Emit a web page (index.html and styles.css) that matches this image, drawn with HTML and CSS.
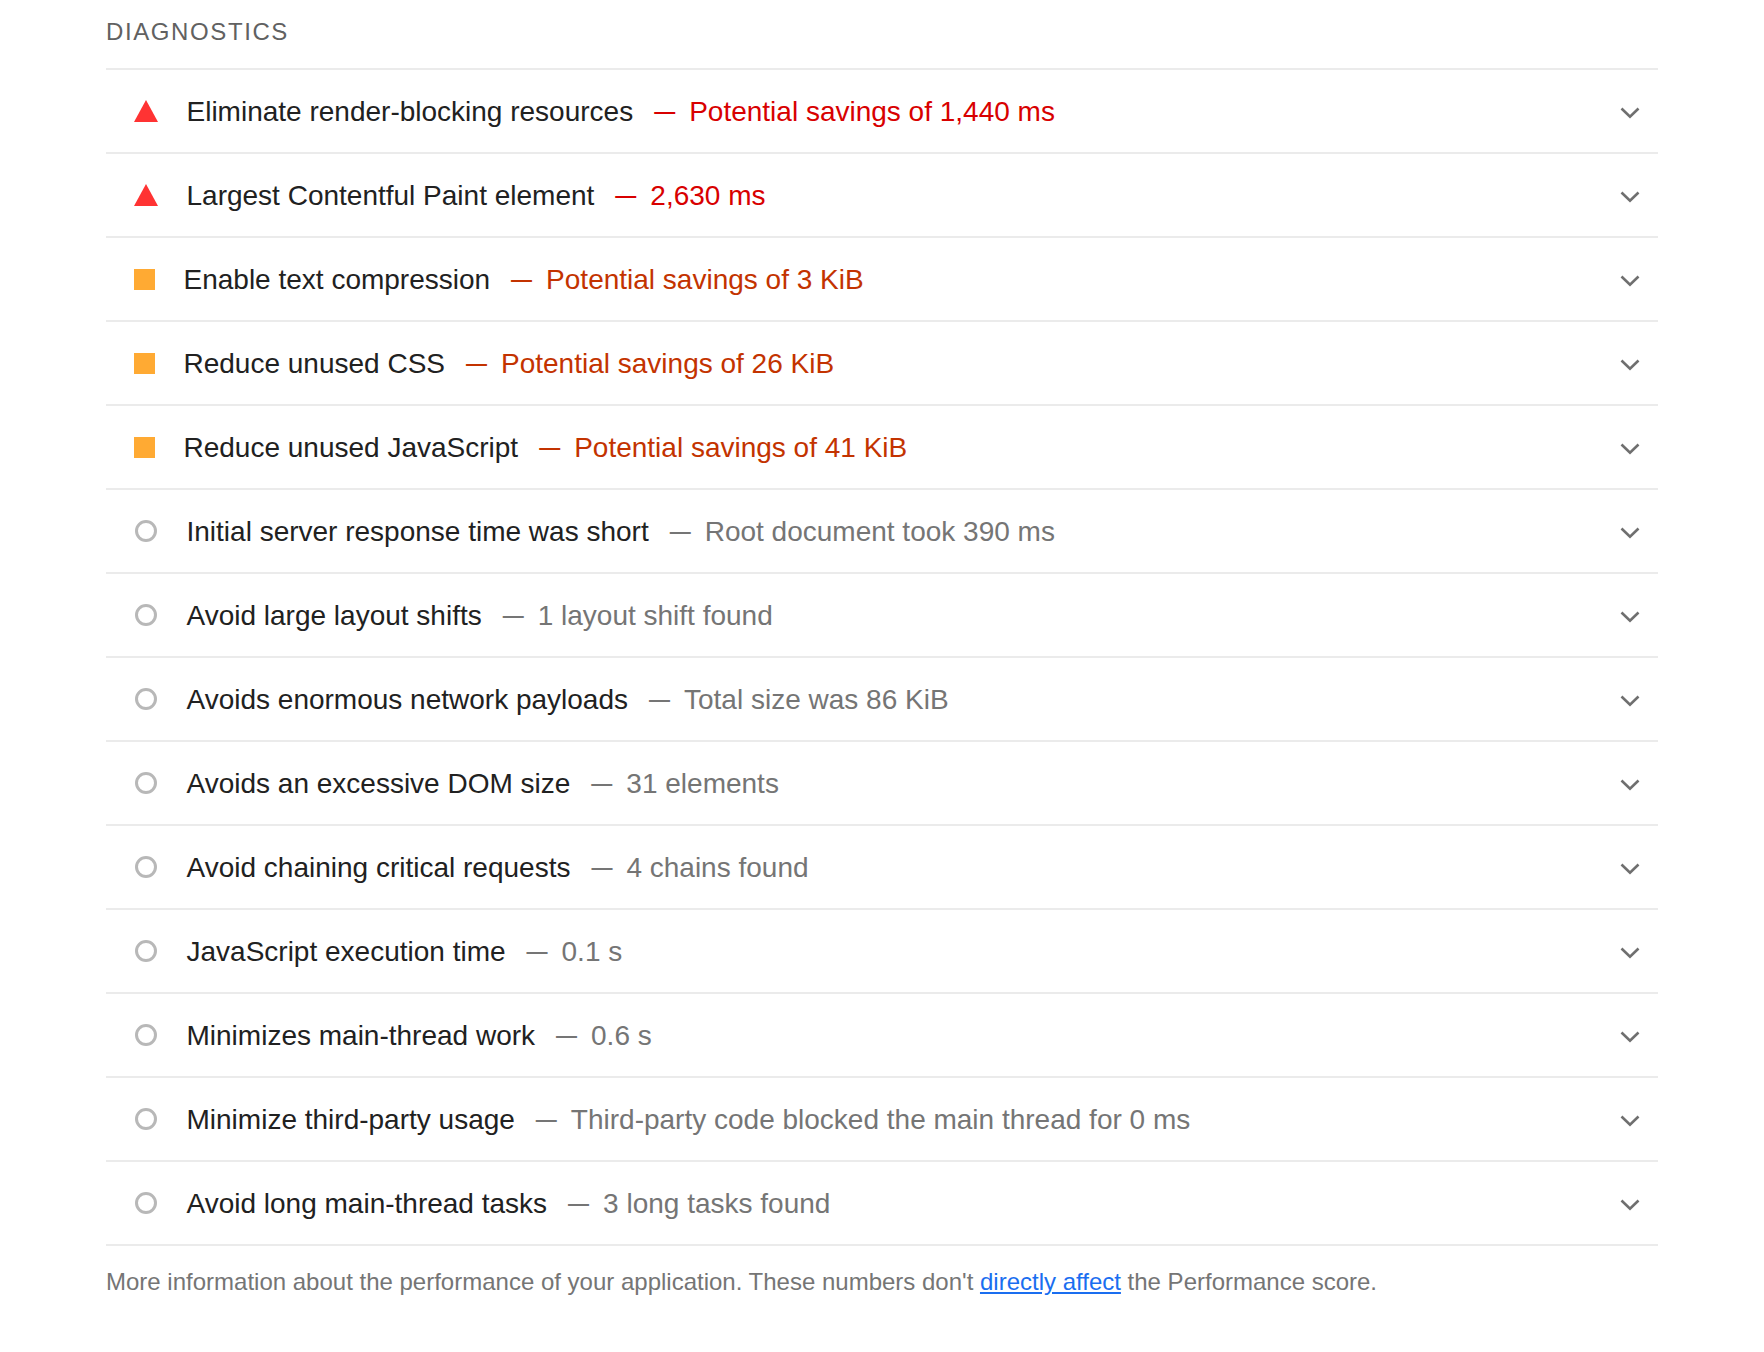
FILE: index.html
```html
<!DOCTYPE html>
<html lang="en">
<head>
<meta charset="utf-8">
<title>Diagnostics</title>
<link rel="stylesheet" href="styles.css">
</head>
<body>
<div class="group">
  <div class="group-title">Diagnostics</div>
  <div class="audits">
    <div class="audit fail">
      <span class="icon"><svg width="24" height="24" viewBox="0 0 24 24"><polygon points="12,1 24,23 0,23" fill="#ff3333"/></svg></span>
      <div class="line"><span class="title">Eliminate render-blocking resources</span><span class="dash">—</span><span class="value">Potential savings of 1,440 ms</span></div>
      <span class="chev"><svg width="20" height="12" viewBox="0 0 20 12"><polyline points="1.5,1.5 10,9.8 18.5,1.5" fill="none" stroke="#6f6f6f" stroke-width="2.6"/></svg></span>
    </div>
    <div class="audit fail">
      <span class="icon"><svg width="24" height="24" viewBox="0 0 24 24"><polygon points="12,1 24,23 0,23" fill="#ff3333"/></svg></span>
      <div class="line"><span class="title">Largest Contentful Paint element</span><span class="dash">—</span><span class="value">2,630 ms</span></div>
      <span class="chev"><svg width="20" height="12" viewBox="0 0 20 12"><polyline points="1.5,1.5 10,9.8 18.5,1.5" fill="none" stroke="#6f6f6f" stroke-width="2.6"/></svg></span>
    </div>
    <div class="audit average">
      <span class="icon square"></span>
      <div class="line"><span class="title">Enable text compression</span><span class="dash">—</span><span class="value">Potential savings of 3 KiB</span></div>
      <span class="chev"><svg width="20" height="12" viewBox="0 0 20 12"><polyline points="1.5,1.5 10,9.8 18.5,1.5" fill="none" stroke="#6f6f6f" stroke-width="2.6"/></svg></span>
    </div>
    <div class="audit average">
      <span class="icon square"></span>
      <div class="line"><span class="title">Reduce unused CSS</span><span class="dash">—</span><span class="value">Potential savings of 26 KiB</span></div>
      <span class="chev"><svg width="20" height="12" viewBox="0 0 20 12"><polyline points="1.5,1.5 10,9.8 18.5,1.5" fill="none" stroke="#6f6f6f" stroke-width="2.6"/></svg></span>
    </div>
    <div class="audit average">
      <span class="icon square"></span>
      <div class="line"><span class="title">Reduce unused JavaScript</span><span class="dash">—</span><span class="value">Potential savings of 41 KiB</span></div>
      <span class="chev"><svg width="20" height="12" viewBox="0 0 20 12"><polyline points="1.5,1.5 10,9.8 18.5,1.5" fill="none" stroke="#6f6f6f" stroke-width="2.6"/></svg></span>
    </div>
    <div class="audit info">
      <span class="icon"><span class="circle"></span></span>
      <div class="line"><span class="title">Initial server response time was short</span><span class="dash">—</span><span class="value">Root document took 390 ms</span></div>
      <span class="chev"><svg width="20" height="12" viewBox="0 0 20 12"><polyline points="1.5,1.5 10,9.8 18.5,1.5" fill="none" stroke="#6f6f6f" stroke-width="2.6"/></svg></span>
    </div>
    <div class="audit info">
      <span class="icon"><span class="circle"></span></span>
      <div class="line"><span class="title">Avoid large layout shifts</span><span class="dash">—</span><span class="value">1 layout shift found</span></div>
      <span class="chev"><svg width="20" height="12" viewBox="0 0 20 12"><polyline points="1.5,1.5 10,9.8 18.5,1.5" fill="none" stroke="#6f6f6f" stroke-width="2.6"/></svg></span>
    </div>
    <div class="audit info">
      <span class="icon"><span class="circle"></span></span>
      <div class="line"><span class="title">Avoids enormous network payloads</span><span class="dash">—</span><span class="value">Total size was 86 KiB</span></div>
      <span class="chev"><svg width="20" height="12" viewBox="0 0 20 12"><polyline points="1.5,1.5 10,9.8 18.5,1.5" fill="none" stroke="#6f6f6f" stroke-width="2.6"/></svg></span>
    </div>
    <div class="audit info">
      <span class="icon"><span class="circle"></span></span>
      <div class="line"><span class="title">Avoids an excessive DOM size</span><span class="dash">—</span><span class="value">31 elements</span></div>
      <span class="chev"><svg width="20" height="12" viewBox="0 0 20 12"><polyline points="1.5,1.5 10,9.8 18.5,1.5" fill="none" stroke="#6f6f6f" stroke-width="2.6"/></svg></span>
    </div>
    <div class="audit info">
      <span class="icon"><span class="circle"></span></span>
      <div class="line"><span class="title">Avoid chaining critical requests</span><span class="dash">—</span><span class="value">4 chains found</span></div>
      <span class="chev"><svg width="20" height="12" viewBox="0 0 20 12"><polyline points="1.5,1.5 10,9.8 18.5,1.5" fill="none" stroke="#6f6f6f" stroke-width="2.6"/></svg></span>
    </div>
    <div class="audit info">
      <span class="icon"><span class="circle"></span></span>
      <div class="line"><span class="title">JavaScript execution time</span><span class="dash">—</span><span class="value">0.1 s</span></div>
      <span class="chev"><svg width="20" height="12" viewBox="0 0 20 12"><polyline points="1.5,1.5 10,9.8 18.5,1.5" fill="none" stroke="#6f6f6f" stroke-width="2.6"/></svg></span>
    </div>
    <div class="audit info">
      <span class="icon"><span class="circle"></span></span>
      <div class="line"><span class="title">Minimizes main-thread work</span><span class="dash">—</span><span class="value">0.6 s</span></div>
      <span class="chev"><svg width="20" height="12" viewBox="0 0 20 12"><polyline points="1.5,1.5 10,9.8 18.5,1.5" fill="none" stroke="#6f6f6f" stroke-width="2.6"/></svg></span>
    </div>
    <div class="audit info">
      <span class="icon"><span class="circle"></span></span>
      <div class="line"><span class="title">Minimize third-party usage</span><span class="dash">—</span><span class="value">Third-party code blocked the main thread for 0 ms</span></div>
      <span class="chev"><svg width="20" height="12" viewBox="0 0 20 12"><polyline points="1.5,1.5 10,9.8 18.5,1.5" fill="none" stroke="#6f6f6f" stroke-width="2.6"/></svg></span>
    </div>
    <div class="audit info">
      <span class="icon"><span class="circle"></span></span>
      <div class="line"><span class="title">Avoid long main-thread tasks</span><span class="dash">—</span><span class="value">3 long tasks found</span></div>
      <span class="chev"><svg width="20" height="12" viewBox="0 0 20 12"><polyline points="1.5,1.5 10,9.8 18.5,1.5" fill="none" stroke="#6f6f6f" stroke-width="2.6"/></svg></span>
    </div>
  </div>
  <div class="description">More information about the performance of your application. These numbers don't <a href="#">directly affect</a> the Performance score.</div>
</div>
</body>
</html>
```

FILE: styles.css
```css
* {
  box-sizing: border-box;
}

body {
  margin: 0;
  background: #ffffff;
  font-family: "Liberation Sans", Arial, Helvetica, sans-serif;
}

.group {
  margin-left: 106px;
  width: 1552px;
}

.group-title {
  font-size: 24px;
  line-height: 32px;
  letter-spacing: 1.6px;
  color: #616161;
  text-transform: uppercase;
  padding-top: 16px;
  margin-bottom: 20px;
}

.audits {
  border-top: 2px solid #ebebeb;
}

.audit {
  display: flex;
  align-items: center;
  height: 84px;
  border-bottom: 2px solid #ebebeb;
}

.icon {
  flex: none;
  display: flex;
  align-items: center;
  justify-content: center;
  width: 24px;
  height: 24px;
  margin-left: 28px;
  margin-right: 28.5px;
}

.icon svg {
  display: block;
}

.icon.square {
  width: 21px;
  height: 21px;
  background: #ffaa33;
}

.circle {
  display: block;
  flex: none;
  width: 22px;
  height: 22px;
  border: 3px solid #b8b8b8;
  border-radius: 50%;
}

.line {
  flex: 1;
  font-size: 28px;
  line-height: 40px;
  white-space: nowrap;
}

.title {
  color: #212121;
}

.dash {
  font-size: 21px;
  font-weight: 700;
  vertical-align: 3px;
  margin-left: 21px;
  margin-right: 14px;
}

.info .dash,
.info .value {
  color: #757575;
}

.fail .dash,
.fail .value {
  color: #d80000;
}

.average .dash,
.average .value {
  color: #c33300;
}

.chev {
  flex: none;
  display: flex;
  margin-top: 4px;
  margin-right: 18px;
}

.chev svg {
  display: block;
}

.description {
  margin-top: 20px;
  font-size: 24px;
  line-height: 32px;
  color: #757575;
}

.description a {
  color: #1a6ef0;
  text-decoration: underline;
}
```
